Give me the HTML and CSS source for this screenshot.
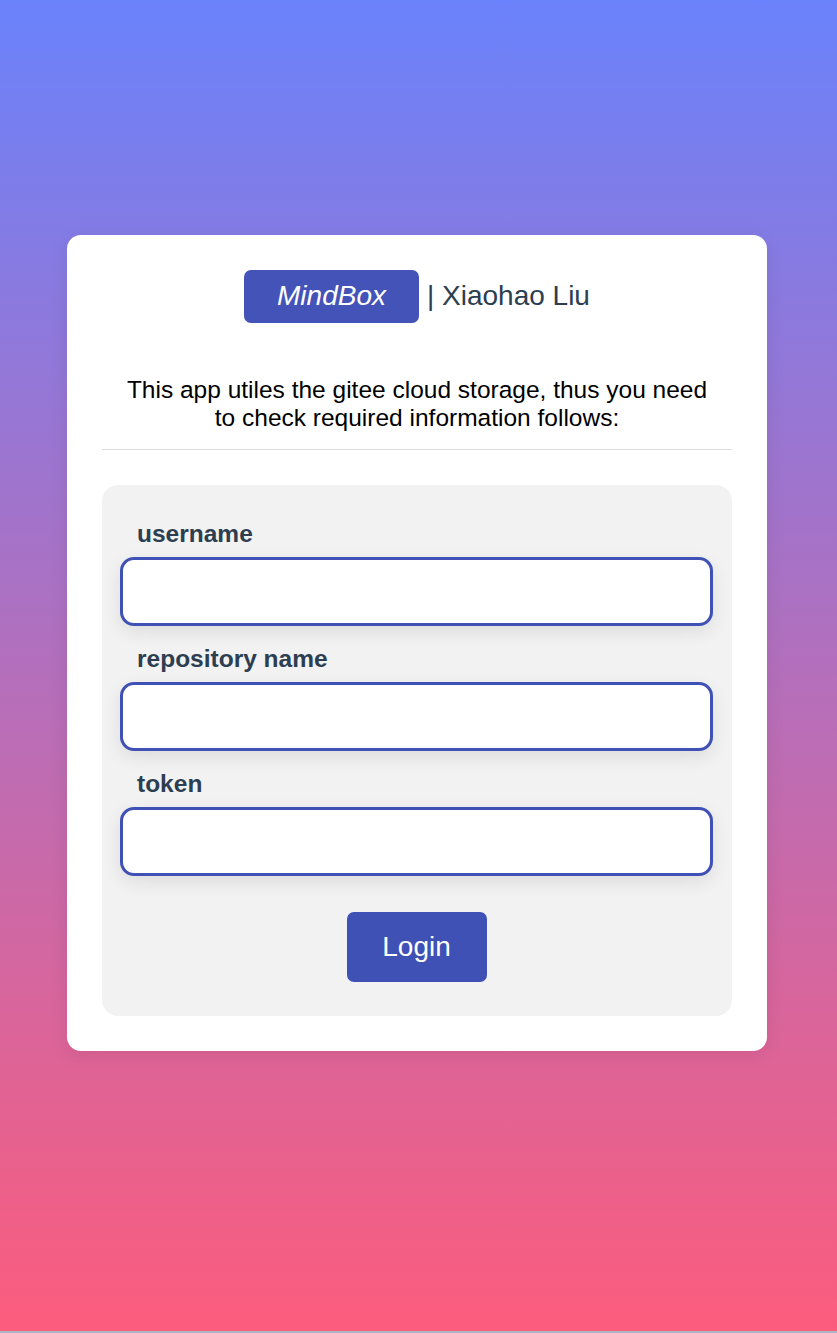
FILE: index.html
```html
<!DOCTYPE html>
<html lang="en">
<head>
<meta charset="utf-8">
<title>MindBox | Login</title>
<link rel="stylesheet" href="styles.css">
</head>
<body>
<div class="page">
  <div class="card">
    <div class="brand">
      <span class="badge">MindBox</span>
      <span class="author">| Xiaohao Liu</span>
    </div>
    <p class="desc">This app utiles the gitee cloud storage, thus you need to check required information follows:</p>
    <hr class="rule">
    <form class="form-box" onsubmit="return false">
      <div class="field">
        <label class="label" for="u">username</label>
        <input class="input" id="u" type="text">
      </div>
      <div class="field">
        <label class="label" for="r">repository name</label>
        <input class="input" id="r" type="text">
      </div>
      <div class="field">
        <label class="label" for="t">token</label>
        <input class="input" id="t" type="text">
      </div>
      <div class="actions">
        <button class="btn" type="submit">Login</button>
      </div>
    </form>
  </div>
</div>
</body>
</html>
```

FILE: styles.css
```css
html {
  background: #adb6be;
}
body {
  margin: 0;
  font-family: "Liberation Sans", Arial, sans-serif;
}
.page {
  height: 1331px;
  box-sizing: border-box;
  padding: 235px 3px 0 0;
  background: linear-gradient(to bottom, #6a82fb, #fc5c7d);
  display: flex;
  justify-content: center;
  align-items: flex-start;
}
.card {
  width: 700px;
  box-sizing: border-box;
  background: #fff;
  border-radius: 14px;
  padding: 35px 35px 35px;
  box-shadow: 0 4px 20px rgba(0, 0, 0, 0.08);
}
.brand {
  display: flex;
  justify-content: center;
  align-items: center;
  gap: 8px;
}
.badge {
  background: #4353b8;
  color: #fff;
  font-style: italic;
  font-size: 28px;
  line-height: 33px;
  padding: 9px 33px 11px;
  border-radius: 7px;
}
.author {
  color: #2c3e50;
  font-size: 28px;
  line-height: 33px;
  padding-bottom: 2px;
}
.desc {
  margin: 53px 0 0;
  padding: 0 18px;
  text-align: center;
  font-size: 24.5px;
  line-height: 28px;
  color: #000;
}
.rule {
  margin: 17px 0 0;
  border: 0;
  border-top: 1px solid #dcdcdc;
}
.form-box {
  margin-top: 35px;
  background: #f2f2f2;
  border-radius: 16px;
  padding: 35px 19px 34px 18px;
  display: flex;
  flex-direction: column;
}
.field {
  display: flex;
  flex-direction: column;
  margin-bottom: 19px;
}
.label {
  padding-left: 17px;
  font-size: 24.5px;
  line-height: 28px;
  font-weight: bold;
  color: #2c3e50;
  margin-bottom: 9px;
}
.input {
  height: 69px;
  box-sizing: border-box;
  border: 3px solid #3f51b5;
  border-radius: 14px;
  background: #fff;
  box-shadow: 0 6px 18px rgba(0, 0, 0, 0.09);
  font-size: 22px;
  padding: 0 14px;
  outline: none;
}
.actions {
  display: flex;
  justify-content: center;
  margin-top: 17px;
}
.btn {
  width: 140px;
  height: 70px;
  border: 0;
  border-radius: 7px;
  background: #3f51b5;
  color: #fff;
  font-family: "Liberation Sans", Arial, sans-serif;
  font-size: 28px;
  cursor: pointer;
}
```
